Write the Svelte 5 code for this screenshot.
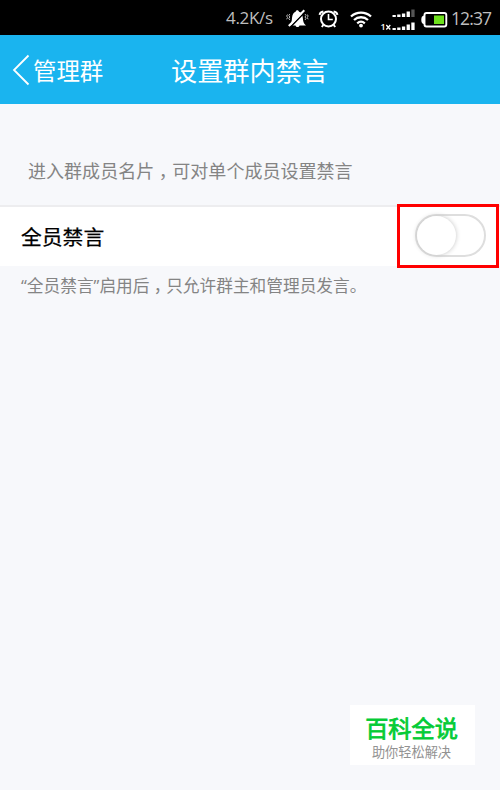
<script lang="ts">
	let muteAll = $state(false);

	// signal strength bars, shortest first
	const bars = [2, 2.5, 3.5, 5.5, 7.5];
</script>

<div class="screen">
	<div class="status">
		<span class="speed">4.2K/s</span>
		<svg class="icons" width="164" height="34" viewBox="284 0 164 34">
			<!-- muted bell -->
			<path d="M289 24.500c2.600-2 2.700-4 3-7.500.4-3.800 1.600-5.600 3.600-6.200.2-2.200 3.200-2.200 3.400 0 2.600.8 3.500 3 3.800 6.200.3 3.500.7 5.500 3.200 7.500h-6.500c-.6 2-3.400 2-4 0z" fill="#fff" />
			<path d="M291 25.500 306.500 9.500" stroke="#000" stroke-width="1.600" />
			<path d="M288.800 25 304.300 9.300" stroke="#fff" stroke-width="2" />
			<path d="M289.800 13l-1 1.500 1 1.500-1 1.500 1 1.500M287.500 13.500l-.8 1.500.8 1.500-.8 1.800M305 13l1 1.500-1 1.500 1 1.500-1 1.500M307.300 13.500l.8 1.500-.8 1.500.8 1.800" fill="none" stroke="#bbb" />
			<!-- alarm clock -->
			<circle cx="328.500" cy="18" r="7.500" fill="none" stroke="#fff" stroke-width="2" />
			<path d="M328.500 13v5.500h4.300" fill="none" stroke="#fff" stroke-width="1.600" />
			<path d="M319.600 13.800c.3-2 1.800-3.200 3.800-3.400M337.400 13.800c-.3-2-1.800-3.200-3.800-3.400M323.300 24l-1.500 2M333.700 24l1.500 2" fill="none" stroke="#fff" stroke-width="2" />
			<!-- wifi -->
			<path d="M351 15.500c5.700-5.200 14.300-5.200 20 0M354 19c4-3.700 10-3.700 14 0M357.200 22.300c2.300-2 5.300-2 7.600 0" fill="none" stroke="#fff" stroke-width="2.300" />
			<circle cx="361" cy="24.600" r="1.900" fill="#fff" />
			<!-- two sim signals -->
			{#each bars as h, i}
				<rect x={392.5 + i * 4.7} y={16 - h} width="3.300" height={h} fill={i === 4 ? '#555' : '#fff'} />
				<rect x={392.5 + i * 4.7} y={29 - h} width="3.300" height={h} fill="#fff" />
			{/each}
			<text x="380.500" y="29" font-size="9" font-weight="600" fill="#fff">1</text>
			<path d="M386.300 24l4 4.500M390.300 24l-4 4.500" stroke="#fff" stroke-width="1.300" />
			<!-- battery -->
			<rect x="424.500" y="12" width="21.800" height="13.500" rx="2" fill="none" stroke="#fff" stroke-width="1.900" />
			<path d="M424 14.500c-2 .3-2.700 1.400-2.700 4.200s.7 4 2.700 4.300z" fill="#fff" />
			<rect x="434" y="14.500" width="10" height="8.500" fill="#6de01c" />
		</svg>
		<span class="clock">12:37</span>
	</div>

	<header>
		<button class="back">
			<svg width="18" height="32" viewBox="0 0 18 32">
				<path d="M16.500 1.500 2 16l14.500 14.500" fill="none" stroke="#fff" stroke-width="1.800" />
			</svg>
			<span>管理群</span>
		</button>
		<h1>设置群内禁言</h1>
	</header>

	<p class="hint">进入群成员名片<span class="comma">，</span>可对单个成员设置禁言</p>

	<div class="row">
		<span class="label">全员禁言</span>
		<div class="mark">
			<button class="switch" class:on={muteAll} onclick={() => (muteAll = !muteAll)} aria-label="全员禁言">
				<span class="knob"></span>
			</button>
		</div>
	</div>

	<p class="note">“全员禁言”启用后<span class="comma">，</span>只允许群主和管理员发言。</p>

	<div class="badge">
		<strong>百科全说</strong>
		<span>助你轻松解决</span>
	</div>
</div>

<style>
	:global(body) {
		background: #f7f8fb;
	}

	.screen {
		height: 790px;
		display: flex;
		flex-direction: column;
		background: #f7f8fb;
		font-family: "Open Sans", "Noto Sans CJK SC", sans-serif;
	}

	.status {
		height: 35px;
		flex: none;
		display: flex;
		align-items: center;
		background: #000;
		color: #bebebe;
	}

	.speed {
		width: 58px;
		margin-left: 226px;
		font-size: 17px;
		letter-spacing: -0.3px;
	}

	.icons {
		flex: none;
	}

	.clock {
		margin-left: 3px;
		font-size: 17.5px;
		letter-spacing: -0.9px;
		white-space: nowrap;
	}

	header {
		height: 69px;
		flex: none;
		display: flex;
		align-items: center;
		background: #1ab4ef;
		color: #fff;
	}

	button {
		border: 0;
		padding: 0;
		background: none;
		font: inherit;
		color: inherit;
		text-align: left;
	}

	.back {
		width: 159px;
		margin-left: 12px;
		display: flex;
		align-items: center;
		gap: 3px;
		font-size: 23.4px;
	}

	h1 {
		margin: 0;
		font-size: 26.2px;
		font-weight: 400;
	}

	p {
		margin: 0;
		color: #848484;
		white-space: nowrap;
	}

	.hint {
		padding: 53px 0 0 28px;
		height: 48px;
		font-size: 18.05px;
		line-height: 28px;
	}

	/* half-width comma centred in a full-width cell */
	.comma {
		display: inline-block;
		width: 1em;
		text-align: center;
		font-feature-settings: "halt";
	}

	.row {
		height: 61px;
		flex: none;
		display: flex;
		align-items: center;
		justify-content: space-between;
		box-sizing: border-box;
		padding: 0 1px 0 21px;
		background: #fff;
		border-top: 2px solid #ededef;
	}

	.label {
		padding-bottom: 2px;
		font-size: 20.8px;
		color: #000;
		-webkit-text-stroke: 0.25px #000;
	}

	.mark {
		width: 102px;
		height: 64px;
		flex: none;
		box-sizing: border-box;
		margin: -4px 0 -2px;
		display: flex;
		align-items: center;
		padding-left: 15px;
		border: 3px solid #f00;
	}

	.switch {
		width: 71px;
		height: 43px;
		box-sizing: border-box;
		border: 2px solid #dedede;
		border-radius: 22px;
		background: #fff;
	}

	.knob {
		display: block;
		width: 39px;
		height: 39px;
		border-radius: 50%;
		background: #fff;
		box-shadow: 0 0 5px #c4c4c4;
	}

	.on .knob {
		margin-left: 28px;
	}

	.note {
		padding: 6px 0 0 21px;
		font-size: 16.7px;
		line-height: 28px;
	}

	.badge {
		width: 125px;
		height: 60px;
		box-sizing: border-box;
		margin: auto 25px 25px auto;
		padding: 7px 2px 0 0;
		display: flex;
		flex-direction: column;
		align-items: center;
		background: #fff;
	}

	.badge strong {
		font-size: 23.2px;
		line-height: 33px;
		color: #04cb36;
		font-weight: 400;
		-webkit-text-stroke: 0.8px #04cb36;
	}

	.badge span {
		font-size: 13.2px;
		line-height: 14px;
		color: #929292;
	}
</style>
